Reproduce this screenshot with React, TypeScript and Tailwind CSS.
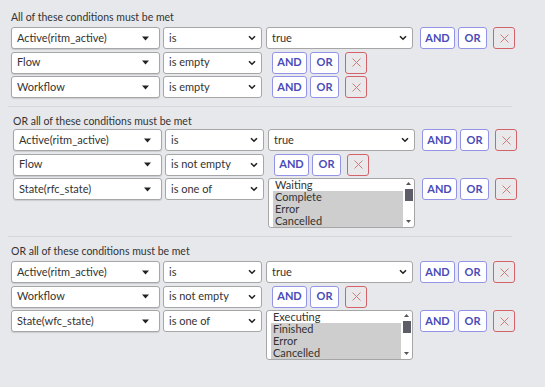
import React from "react";

type Row = {
  field: string;
  op: string;
  value?: string;
  list?: { label: string; selected: boolean }[];
};

type Group = {
  title: string;
  shift: string;
  headGap: string;
  rows: Row[];
  divider: boolean;
};

const groups: Group[] = [
  {
    title: "All of these conditions must be met",
    shift: "pl-[3px]",
    headGap: "mb-[3px]",
    divider: true,
    rows: [
      { field: "Active(ritm_active)", op: "is", value: "true" },
      { field: "Flow", op: "is empty" },
      { field: "Workflow", op: "is empty" },
    ],
  },
  {
    title: "OR all of these conditions must be met",
    shift: "pl-[5px]",
    headGap: "mb-[1px]",
    divider: true,
    rows: [
      { field: "Active(ritm_active)", op: "is", value: "true" },
      { field: "Flow", op: "is not empty" },
      {
        field: "State(rfc_state)",
        op: "is one of",
        list: [
          { label: "Waiting", selected: false },
          { label: "Complete", selected: true },
          { label: "Error", selected: true },
          { label: "Cancelled", selected: true },
        ],
      },
    ],
  },
  {
    title: "OR all of these conditions must be met",
    shift: "pl-[3px]",
    headGap: "mb-[3px]",
    divider: false,
    rows: [
      { field: "Active(ritm_active)", op: "is", value: "true" },
      { field: "Workflow", op: "is not empty" },
      {
        field: "State(wfc_state)",
        op: "is one of",
        list: [
          { label: "Executing", selected: false },
          { label: "Finished", selected: true },
          { label: "Error", selected: true },
          { label: "Cancelled", selected: true },
        ],
      },
    ],
  },
];

const Chevron = () => (
  <svg width="8" height="6" viewBox="0 0 8 6" className="shrink-0">
    <path d="M1 1.2 L4 4.2 L7 1.2" fill="none" stroke="#222" strokeWidth="1.6" />
  </svg>
);

const Caret = () => (
  <svg width="7" height="5" viewBox="0 0 7 5" className="shrink-0">
    <path d="M0 0.5 H7 L3.5 4.5 Z" fill="#222" />
  </svg>
);

const FieldSelect = ({ label }: { label: string }) => (
  <div className="flex h-[22px] w-[149px] shrink-0 items-center justify-between rounded-[3px] border border-[#a6a6a6] bg-white pl-[5px] pr-[10px] text-[11px] text-[#333] shadow-[0_1px_1px_rgba(0,0,0,0.12)]">
    <span>{label}</span>
    <Caret />
  </div>
);

const OpSelect = ({ label }: { label: string }) => (
  <div className="ml-[3px] flex h-[22px] w-[99px] shrink-0 items-center justify-between rounded-[3px] border border-[#a6a6a6] bg-white pl-[5px] pr-[5px] text-[11px] text-[#333]">
    <span>{label}</span>
    <Chevron />
  </div>
);

const ValueSelect = ({ label }: { label: string }) => (
  <div className="ml-[4px] flex h-[22px] w-[147px] shrink-0 items-center justify-between rounded-[3px] border border-[#a6a6a6] bg-white pl-[5px] pr-[5px] text-[11px] text-[#333]">
    <span>{label}</span>
    <Chevron />
  </div>
);

const ListBox = ({ items }: { items: { label: string; selected: boolean }[] }) => (
  <div className="ml-[4px] flex h-[50px] w-[147px] shrink-0 rounded-[3px] border border-[#a6a6a6] bg-white text-[11px] text-[#333]">
    <div className="flex flex-1 flex-col pl-[4px]">
      {items.map((it) => (
        <div
          key={it.label}
          className={`h-[12px] overflow-hidden pl-[2px] leading-[12px] ${it.selected ? "bg-[#cecece]" : ""}`}
        >
          {it.label}
        </div>
      ))}
    </div>
    <div className="flex w-[11px] flex-col items-center pt-[3px]">
      <svg width="5" height="3" viewBox="0 0 5 3">
        <path d="M0 3 L2.5 0 L5 3 Z" fill="#555" />
      </svg>
      <div className="mt-[4px] h-[12px] w-[8px] bg-[#5d5d68]" />
      <div className="flex-1" />
      <svg width="5" height="3" viewBox="0 0 5 3" className="mb-[4px]">
        <path d="M0 0 L2.5 3 L5 0 Z" fill="#555" />
      </svg>
    </div>
  </div>
);

const Buttons = ({ gap }: { gap: string }) => (
  <div className={`flex shrink-0 items-start ${gap}`}>
    <button className="h-[22px] w-[35px] rounded-[3px] border border-[#9494e6] bg-white text-[11px] font-bold text-[#4a4ab8]">
      AND
    </button>
    <button className="ml-[3px] h-[22px] w-[29px] rounded-[3px] border border-[#9494e6] bg-white text-[11px] font-bold text-[#4a4ab8]">
      OR
    </button>
    <button className="ml-[6px] flex h-[22px] w-[22px] items-center justify-center rounded-[3px] border border-[#d2636b] bg-[#e9e9ec]">
      <svg width="9" height="9" viewBox="0 0 9 9">
        <path d="M0.5 0.5 L8.5 8.5 M8.5 0.5 L0.5 8.5" stroke="#d07a7a" strokeWidth="1" />
      </svg>
    </button>
  </div>
);

const ConditionRow = ({ row }: { row: Row }) => (
  <div className="flex items-start">
    <FieldSelect label={row.field} />
    <OpSelect label={row.op} />
    {row.value && <ValueSelect label={row.value} />}
    {row.list && <ListBox items={row.list} />}
    <Buttons gap={row.value || row.list ? "ml-[7px]" : "ml-[10px]"} />
  </div>
);

export default function App() {
  return (
    <div
      className="h-[387px] w-[545px] overflow-hidden bg-[#e7e8eb] pl-[8px] pt-[11px]"
      style={{ fontFamily: "Lato, 'Liberation Sans', sans-serif" }}
    >
      <div className="w-[504px]">
        {groups.map((g, i) => (
          <div key={i} className={i === 0 ? "" : "pt-[8px]"}>
            <div className={g.shift}>
              <div className={`${g.headGap} h-[13px] text-[10.5px] leading-[13px] text-[#333]`}>{g.title}</div>
              <div className="flex flex-col gap-[2.5px]">
                {g.rows.map((r, j) => (
                  <ConditionRow key={j} row={r} />
                ))}
              </div>
            </div>
            {g.divider && <div className="mt-[8px] h-px w-full bg-[#d6d7db]" />}
          </div>
        ))}
      </div>
    </div>
  );
}
